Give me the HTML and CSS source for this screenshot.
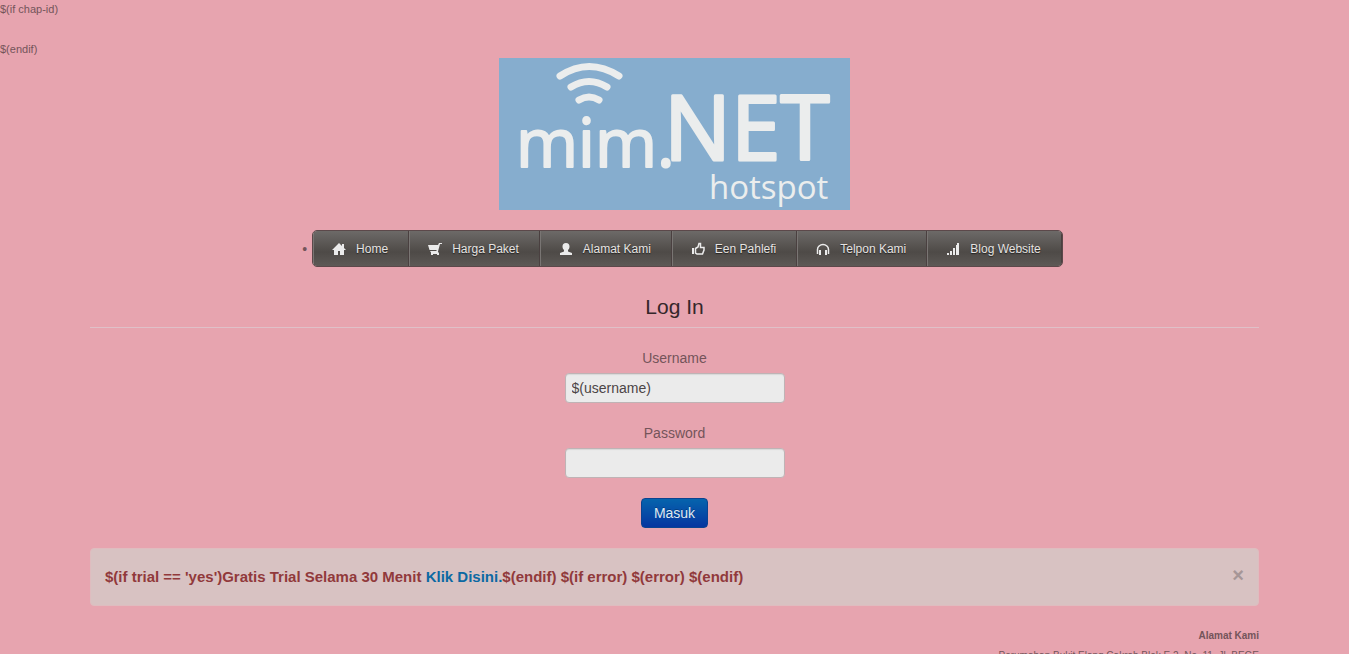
FILE: index.html
```html
<!DOCTYPE html>
<html lang="id">
<head>
    <meta charset="UTF-8">
    <meta name="viewport" content="width=device-width, initial-scale=1.0">
    <title>mim.NET hotspot</title>
    <link rel="stylesheet" href="styles.css">
</head>
<body>

    <!-- Template markers -->
    <div class="marker">$(if chap-id)</div>
    <div class="marker marker-end">$(endif)</div>

    <!-- Logo -->
    <header class="logo">
        <svg width="351" height="152" viewBox="0 0 351 152" role="img" aria-label="mim.NET hotspot">
            <rect width="351" height="152" fill="#86adce"/>
            <g fill="none" stroke="#ebeded" stroke-linecap="round">
                <path d="M61 18Q90 -1 120 18" stroke-width="7"/>
                <path d="M72 29Q90 18 108 29" stroke-width="7"/>
                <path d="M80 42Q90 36 100 42" stroke-width="7"/>
            </g>
            <text class="logo-small" x="17" y="109">mim.</text>
            <text class="logo-big" x="165" y="102">NET</text>
            <text class="logo-sub" x="210" y="141">hotspot</text>
        </svg>
    </header>

    <!-- Navigation -->
    <ul class="menu">
        <li>
            <nav class="nav-bar">
                <a href="#home">
                    <svg class="icon" viewBox="0 0 14 14"><path d="M7 1L0 8h2v5h4V9h2v4h4V8h2l-2-2V2h-2v2z"/></svg>
                    Home
                </a>
                <a href="#harga">
                    <svg class="icon" viewBox="0 0 14 14"><path d="M0 3h10l1-2h3v1h-2L10 9.500v1h1V13H9v-1H5v1H3v-2.500L2 9h6.500V8H1.500z"/></svg>
                    Harga Paket
                </a>
                <a href="#alamat">
                    <svg class="icon" viewBox="0 0 14 14"><path d="M7 1c2.400 0 3.500 1.500 3.500 3.500C10.500 6 10 7 9 8v1.500l4 1.500v2H1v-2l4-1.500V8C4 7 3.500 6 3.500 4.500 3.500 2.500 4.600 1 7 1z"/></svg>
                    Alamat Kami
                </a>
                <a href="#een">
                    <svg class="icon" viewBox="0 0 14 14"><path d="M1 6h2v6H1z"/><path class="line" d="M4.500 6.500L7 5l1-3.500h1.500V5.500H13V8l-1.500 4H6l-1.500-1z"/></svg>
                    Een Pahlefi
                </a>
                <a href="#telpon">
                    <svg class="icon" viewBox="0 0 14 14"><path class="line" d="M1.500 12V7.500a5.500 5 0 0 1 11 0V12"/><path d="M3 8h2v5H3zM9 8h2v5H9z"/></svg>
                    Telpon Kami
                </a>
                <a href="#blog">
                    <svg class="icon" viewBox="0 0 14 14"><path d="M1 11h2v2H1zM4 9h2v4H4zM7 6h2v7H7zM10 3h1v10h-1zM11 1h2v12h-2z"/></svg>
                    Blog Website
                </a>
            </nav>
        </li>
    </ul>

    <main class="container">
        <!-- Login form -->
        <form class="login-form">
            <h1>Log In</h1>
            <label for="username">Username</label>
            <input type="text" id="username" name="username" value="$(username)">
            <label for="password">Password</label>
            <input type="password" id="password" name="password">
            <button type="submit" class="login-btn">Masuk</button>
        </form>

        <!-- Trial and error message -->
        <div class="alert">
            <strong>$(if trial == 'yes')Gratis Trial Selama 30 Menit <a href="#trial">Klik Disini.</a>$(endif) $(if error) $(error) $(endif)</strong>
            <button type="button" class="close" aria-label="Tutup">&times;</button>
        </div>

        <footer class="address">
            <strong>Alamat Kami</strong>
            <p>Perumahan Bukit Elang Cakrah Blok E 2, No. 11, Jl. BEGE</p>
        </footer>
    </main>

</body>
</html>
```

FILE: styles.css
```css
* {
    box-sizing: border-box;
}

body {
    margin: 0;
    height: 100vh;
    overflow: hidden;
    background: #e7a4af;
    color: #74545a;
    font-family: "Liberation Sans", Arial, sans-serif;
    font-size: 14px;
    line-height: 20px;
}

.marker {
    font-size: 11px;
    line-height: 18px;
}

.marker-end {
    margin-top: 22px;
}

/* Logo */
.logo {
    display: flex;
    justify-content: center;
}

.logo svg {
    display: block;
}

.logo text {
    fill: #ebeded;
    stroke: #ebeded;
    stroke-linejoin: round;
    font-family: "Open Sans", sans-serif;
}

.logo .logo-small {
    font-size: 67px;
    stroke-width: 2;
}

.logo .logo-big {
    font-size: 89px;
    stroke-width: 3;
}

.logo .logo-sub {
    font-size: 33px;
    stroke-width: 0;
}

/* Navigation */
.menu {
    display: flex;
    justify-content: center;
    margin: 20px 0;
    padding: 0 0 0 16px;
    list-style: none;
}

.menu li {
    display: flex;
    align-items: center;
    gap: 5px;
}

.menu li::before {
    content: "•";
}

.nav-bar {
    display: flex;
    border: 1px solid #5c484a;
    border-radius: 5px;
    overflow: hidden;
}

.nav-bar a {
    display: flex;
    align-items: center;
    gap: 10px;
    height: 35px;
    padding: 0 20px 0 18px;
    border-left: 1px solid #797573;
    border-right: 1px solid #4a4040;
    background: linear-gradient(#6d6a68, #4e4a47 60%, #5d5956);
    color: #e6e3e1;
    font-size: 12px;
    text-decoration: none;
    text-shadow: 0 1px 1px #222222;
}

.nav-bar a:hover {
    background: #4e4a47;
}

.icon {
    width: 14px;
    height: 14px;
    fill: #ebebeb;
}

.icon .line {
    fill: none;
    stroke: #ebebeb;
    stroke-width: 1.5;
}

/* Login form */
.container {
    margin: 0 90px;
}

.login-form {
    display: flex;
    flex-direction: column;
    align-items: center;
}

.login-form h1 {
    width: 100%;
    margin: 0 0 20px;
    border-bottom: 1px solid #dfc0c8;
    color: #35272a;
    font-size: 21px;
    font-weight: normal;
    line-height: 40px;
    text-align: center;
}

.login-form label {
    margin-bottom: 5px;
}

.login-form input {
    width: 220px;
    height: 30px;
    margin-bottom: 20px;
    padding: 4px 6px;
    border: 1px solid #bfb3b5;
    border-radius: 4px;
    background: #ebebeb;
    color: #4c4546;
    font: inherit;
    box-shadow: inset 0 1px 1px rgba(0, 0, 0, 0.08);
}

.login-btn {
    height: 30px;
    padding: 4px 12px;
    border: 1px solid #0b4390;
    border-radius: 4px;
    background: linear-gradient(#0664ad, #0635a0);
    color: #dfe9f2;
    font: inherit;
    cursor: pointer;
    text-shadow: 0 -1px 0 rgba(0, 0, 0, 0.25);
}

/* Alert */
.alert {
    display: flex;
    align-items: flex-start;
    justify-content: space-between;
    margin: 20px 0;
    padding: 18px 14px;
    border: 1px solid #dfbcbf;
    border-radius: 4px;
    background: #d8c2c2;
    color: #91393b;
    font-size: 15px;
}

.alert a {
    color: #0c69a3;
    text-decoration: none;
}

.close {
    padding: 0;
    border: 0;
    background: none;
    color: #a69697;
    font-size: 20px;
    font-weight: bold;
    line-height: 16px;
    cursor: pointer;
}

/* Address */
.address {
    font-size: 10px;
    text-align: right;
}

.address p {
    margin: 0;
}
```
